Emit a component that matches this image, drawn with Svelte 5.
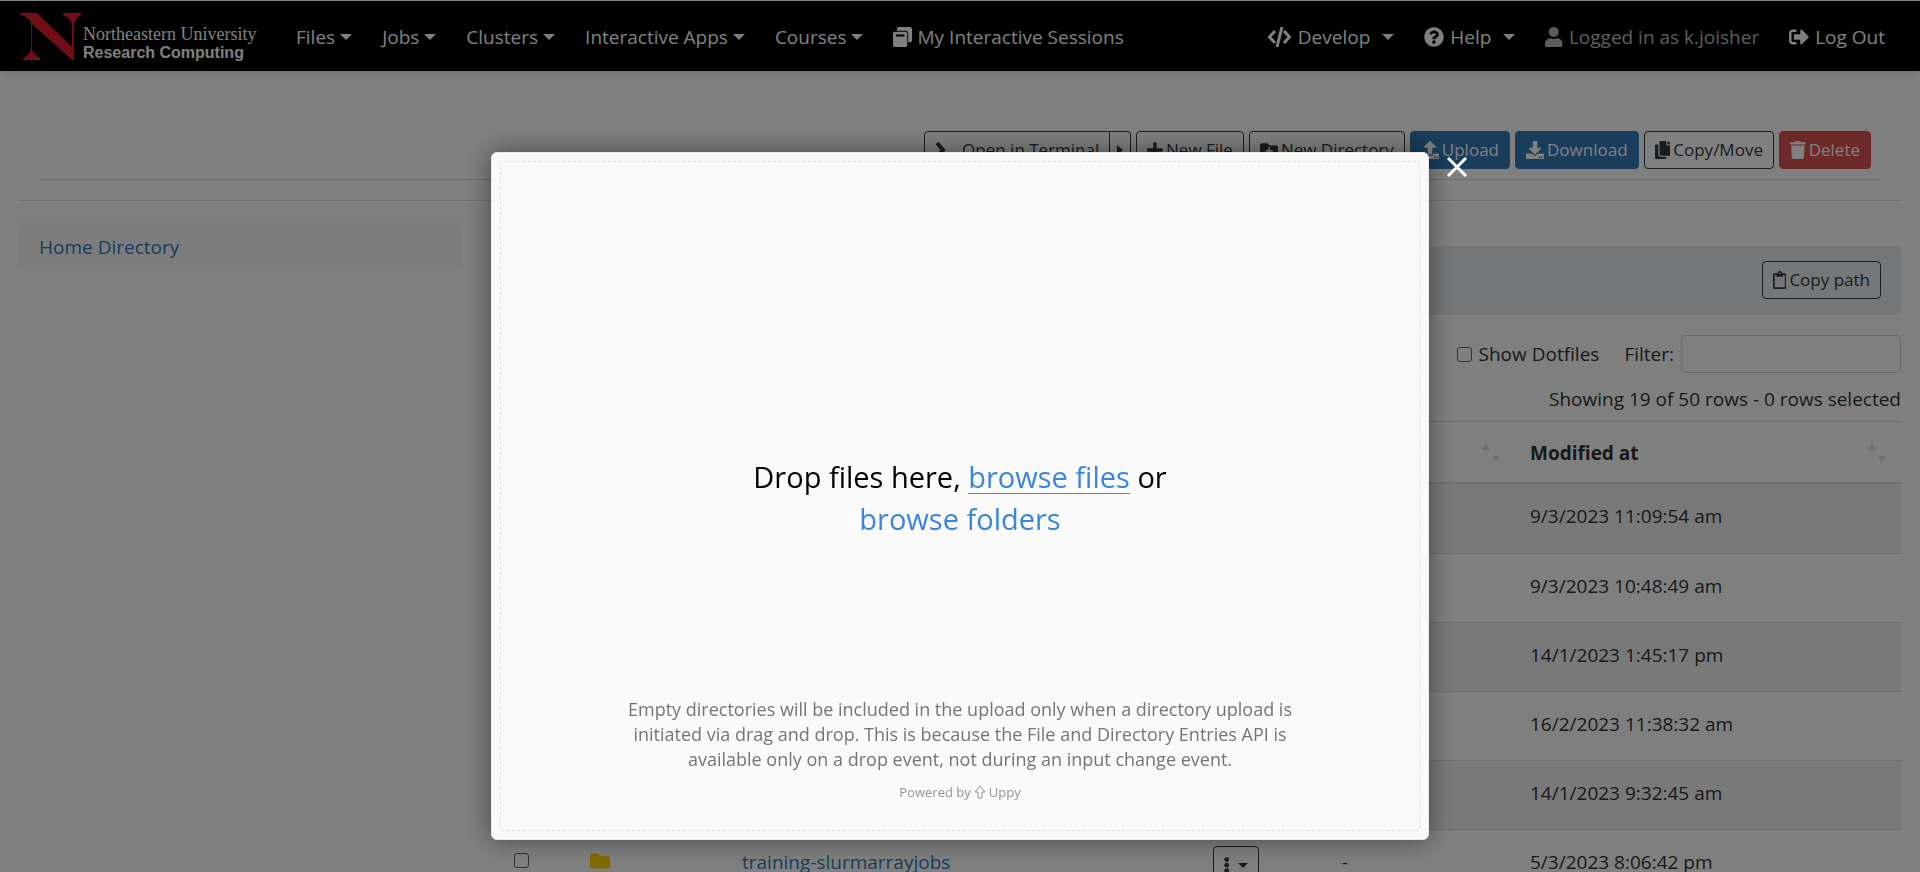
<script>
  const menus = ['Files', 'Jobs', 'Clusters', 'Interactive Apps', 'Courses'];
  const rows = [
    { date: '9/3/2023 11:09:54 am' },
    { date: '9/3/2023 10:48:49 am' },
    { date: '14/1/2023 1:45:17 pm' },
    { date: '16/2/2023 11:38:32 am' },
    { date: '14/1/2023 9:32:45 am' },
    { date: '5/3/2023 8:06:42 pm', name: 'training-slurmarrayjobs', size: '-' }
  ];
  const icons = {
    sessions: { w: 20, h: 21, d: 'M6 0h12a2 2 0 0 1 2 2v12a2 2 0 0 1-2 2h-2V7a3 3 0 0 0-3-3H4V2a2 2 0 0 1 2-2zM2 5h11a2 2 0 0 1 2 2v12a2 2 0 0 1-2 2H2a2 2 0 0 1-2-2V7a2 2 0 0 1 2-2zm1 3v2h9V8z' },
    help: { w: 512, h: 512, d: 'M504 256c0 137-111 248-248 248S8 393 8 256 119 8 256 8s248 111 248 248zM262.700 90c-54.500 0-89.300 23-116.500 63.800-3.500 5.300-2.400 12.400 2.700 16.300l34.700 26.300c5.200 3.900 12.600 3 16.700-2.100 17.900-22.700 30.100-35.800 57.300-35.800 20.400 0 45.700 13.100 45.700 33 0 15-12.400 22.700-32.500 34C247.100 238.500 216 254.900 216 296v4c0 6.600 5.400 12 12 12h56c6.600 0 12-5.400 12-12v-1.300c0-28.500 83.200-29.600 83.200-106.700 0-58-60.200-102-116.500-102zM256 338c-25.400 0-46 20.600-46 46s20.600 46 46 46 46-20.600 46-46-20.600-46-46-46z' },
    user: { w: 448, h: 512, d: 'M224 256a128 128 0 1 0 0-256 128 128 0 0 0 0 256zm89.600 32h-16.700a174 174 0 0 1-145.800 0h-16.700C60.200 288 0 348.200 0 422.400V464c0 26.500 21.500 48 48 48h352c26.500 0 48-21.500 48-48v-41.600C448 348.200 387.800 288 313.600 288z' },
    logout: { w: 512, h: 512, d: 'M497 273 329 441c-15 15-41 4.500-41-17v-96H152c-13.300 0-24-10.700-24-24v-96c0-13.300 10.700-24 24-24h136V88c0-21.400 25.900-32 41-17l168 168c9.300 9.400 9.300 24.600 0 34zM192 436v-40c0-6.600-5.400-12-12-12H96c-17.700 0-32-14.300-32-32V160c0-17.700 14.300-32 32-32h84c6.600 0 12-5.400 12-12V76c0-6.600-5.400-12-12-12H96c-53 0-96 43-96 96v192c0 53 43 96 96 96h84c6.600 0 12-5.400 12-12z' },
    plus: { w: 448, h: 512, d: 'M416 208H272V64c0-17.700-14.300-32-32-32h-32c-17.700 0-32 14.300-32 32v144H32c-17.700 0-32 14.300-32 32v32c0 17.700 14.300 32 32 32h144v144c0 17.700 14.300 32 32 32h32c17.700 0 32-14.300 32-32V304h144c17.700 0 32-14.300 32-32v-32c0-17.700-14.300-32-32-32z' },
    folderPlus: { w: 512, h: 512, d: 'M464 128H272l-64-64H48C21.500 64 0 85.500 0 112v288c0 26.500 21.500 48 48 48h416c26.500 0 48-21.500 48-48V176c0-26.500-21.500-48-48-48zM360 304h-80v80h-48v-80h-80v-48h80v-80h48v80h80z' },
    folder: { w: 512, h: 512, d: 'M464 128H272l-64-64H48C21.500 64 0 85.500 0 112v288c0 26.500 21.500 48 48 48h416c26.500 0 48-21.500 48-48V176c0-26.500-21.500-48-48-48z' },
    upload: { w: 512, h: 512, d: 'M296 384h-80c-13.300 0-24-10.700-24-24V192h-87.700c-17.800 0-26.700-21.500-14.100-34.100L242.300 5.700c7.500-7.500 19.800-7.500 27.300 0l152.200 152.200c12.600 12.600 3.700 34.100-14.100 34.100H320v168c0 13.300-10.700 24-24 24zm216-8v112c0 13.300-10.700 24-24 24H24c-13.300 0-24-10.700-24-24V376c0-13.300 10.700-24 24-24h136v8c0 30.900 25.100 56 56 56h80c30.900 0 56-25.100 56-56v-8h136c13.300 0 24 10.700 24 24zm-144 68v40h40v-40zm64 0v40h40v-40z' },
    download: { w: 512, h: 512, d: 'M216 0h80c13.300 0 24 10.700 24 24v168h87.700c17.800 0 26.700 21.500 14.100 34.100L269.700 378.300c-7.500 7.500-19.800 7.500-27.300 0L90.100 226.100c-12.600-12.600-3.700-34.100 14.100-34.100H192V24c0-13.300 10.700-24 24-24zm296 376v112c0 13.300-10.700 24-24 24H24c-13.300 0-24-10.700-24-24V376c0-13.300 10.700-24 24-24h146.700l49 49c20.100 20.100 52.500 20.100 72.600 0l49-49H488c13.300 0 24 10.700 24 24zm-144 68v40h40v-40zm64 0v40h40v-40z' },
    copy: { w: 448, h: 512, d: 'M320 448v40c0 13.300-10.700 24-24 24H24c-13.300 0-24-10.700-24-24V120c0-13.300 10.700-24 24-24h72v296c0 30.900 25.100 56 56 56zm0-344V0H152c-13.300 0-24 10.700-24 24v368c0 13.300 10.700 24 24 24h272c13.300 0 24-10.700 24-24V128H344c-13.200 0-24-10.800-24-24zm121-31L375 7a24 24 0 0 0-17-7h-6v96h96v-6.100a24 24 0 0 0-7-17z' },
    trash: { w: 448, h: 512, d: 'M432 32H312l-9.400-18.700A24 24 0 0 0 281.100 0H166.800a23.700 23.700 0 0 0-21.400 13.300L136 32H16A16 16 0 0 0 0 48v32a16 16 0 0 0 16 16h416a16 16 0 0 0 16-16V48a16 16 0 0 0-16-16zM53.200 467a48 48 0 0 0 47.900 45h245.800a48 48 0 0 0 47.900-45L416 128H32z' },
    clipboard: { w: 384, h: 512, d: 'M336 64h-80a64 64 0 0 0-128 0H48C21.500 64 0 85.500 0 112v352c0 26.500 21.500 48 48 48h288c26.500 0 48-21.500 48-48V112c0-26.500-21.500-48-48-48zM192 40a24 24 0 1 1 0 48 24 24 0 0 1 0-48zm144 418a6 6 0 0 1-6 6H54a6 6 0 0 1-6-6V118a6 6 0 0 1 6-6h42v36a12 12 0 0 0 12 12h168a12 12 0 0 0 12-12v-36h42a6 6 0 0 1 6 6z' }
  };
</script>

{#snippet icon(name)}
  <svg class="icon {name}" viewBox="0 0 {icons[name].w} {icons[name].h}" aria-hidden="true">
    <path fill="currentColor" fill-rule="evenodd" d={icons[name].d} />
  </svg>
{/snippet}

<div class="page">
  <nav class="navbar">
    <a class="brand" href="#home">
      <svg class="mark" viewBox="0 0 61 47" aria-hidden="true">
        <path fill="#e31b2d" d="M0 0H17L52 34V12Q51 5 43 2V0H61V2Q55 5 54 12V47H52L12 11V36Q13 42 20 45V47H3V45Q10 42 11 36V9Q7 3 0 2Z" />
      </svg>
      <span class="brand-text">
        <span class="university">Northeastern University</span>
        <span class="department">Research Computing</span>
      </span>
    </a>
    <div class="menu">
      {#each menus as label}
        <button class="nav-item">{label}<i class="caret"></i></button>
      {/each}
      <a class="nav-item" href="#sessions">{@render icon('sessions')}My Interactive Sessions</a>
    </div>
    <div class="menu right">
      <button class="nav-item">
        <svg class="icon code" viewBox="0 0 25 20" fill="none" stroke="currentColor" stroke-width="3" aria-hidden="true">
          <path d="M8 4 2.500 10 8 16M17 4l5.500 6-5.500 6M15 0l-5 20" />
        </svg>Develop<i class="caret wide"></i>
      </button>
      <button class="nav-item">{@render icon('help')}Help<i class="caret wide"></i></button>
      <span class="nav-item muted">{@render icon('user')}Logged in as k.joisher</span>
      <a class="nav-item" href="#logout">{@render icon('logout')}Log Out</a>
    </div>
  </nav>

  <div class="toolbar">
    <div class="split">
      <button class="btn">
        <svg class="icon prompt" viewBox="0 0 24 18" fill="none" stroke="currentColor" stroke-width="4" aria-hidden="true">
          <path d="m2 2 6 7-6 7" />
        </svg>Open in Terminal
      </button>
      <button class="btn toggle" aria-label="Terminal options"><i class="caret side"></i></button>
    </div>
    <button class="btn">{@render icon('plus')}New File</button>
    <button class="btn">{@render icon('folderPlus')}New Directory</button>
    <button class="btn primary">{@render icon('upload')}Upload</button>
    <button class="btn primary">{@render icon('download')}Download</button>
    <button class="btn">{@render icon('copy')}Copy/Move</button>
    <button class="btn danger">{@render icon('trash')}Delete</button>
  </div>

  <div class="columns">
    <aside><a class="home" href="#home-directory">Home Directory</a></aside>
    <main>
      <div class="path-bar">
        <button class="btn">{@render icon('clipboard')}Copy path</button>
      </div>
      <div class="filters">
        <label class="dotfiles"><input class="check" type="checkbox" />Show Dotfiles</label>
        <label class="filter">Filter:<input class="search" type="search" /></label>
      </div>
      <p class="status">Showing 19 of 50 rows - 0 rows selected</p>
      <table>
        <colgroup>
          <col class="c-check" /><col class="c-type" /><col /><col class="c-action" /><col class="c-size" /><col class="c-date" />
        </colgroup>
        <thead>
          <tr>
            <th></th><th></th><th></th><th></th>
            <th><span class="head"><i></i><span class="sort"></span></span></th>
            <th><span class="head">Modified at<span class="sort"></span></span></th>
          </tr>
        </thead>
        <tbody>
          {#each rows as row}
            <tr>
              {#if row.name}
                <td><input class="check" type="checkbox" aria-label={row.name} /></td>
                <td>{@render icon('folder')}</td>
                <td><a href="#folder">{row.name}</a></td>
                <td>
                  <button class="btn actions" aria-label="Actions">
                    <svg class="icon dots" viewBox="0 0 6 20" fill="currentColor" aria-hidden="true">
                      <circle cx="3" cy="4" r="2.700" /><circle cx="3" cy="10.200" r="2.700" /><circle cx="3" cy="16.400" r="2.700" />
                    </svg><i class="caret small"></i>
                  </button>
                </td>
                <td>{row.size}</td>
              {:else}
                <td></td><td></td><td></td><td></td><td></td>
              {/if}
              <td>{row.date}</td>
            </tr>
          {/each}
        </tbody>
      </table>
    </main>
  </div>
</div>

<div class="overlay">
  <div class="dialog" role="dialog" aria-modal="true">
    <button class="close" aria-label="Close">
      <svg viewBox="0 0 20 20" fill="none" stroke="currentColor" stroke-width="3" aria-hidden="true"><path d="m1 1 18 18M19 1 1 19" /></svg>
    </button>
    <div class="drop">
      <div class="prompt-text">
        Drop files here, <button class="link underlined">browse files</button> or <button class="link">browse folders</button>
      </div>
      <div class="note">
        <p>Empty directories will be included in the upload only when a directory upload is initiated via drag and drop. This is because the File and Directory Entries API is available only on a drop event, not during an input change event.</p>
        <a class="powered" href="#uppy">Powered by
          <svg viewBox="0 0 12 14" fill="none" stroke="currentColor" aria-hidden="true"><path d="M6 1 1 7h3v6h4V7h3z" /></svg>Uppy</a>
      </div>
    </div>
  </div>
</div>

<style>
  :global(body) { overflow: hidden; background: #fff; }
  :global(*) { box-sizing: border-box; }
  .page, .overlay { font-family: "Open Sans", sans-serif; font-size: 19px; line-height: 30px; color: #333; }
  .page { height: 100vh; overflow: hidden; }
  button { font: inherit; color: inherit; background: none; border: 0; padding: 0; }
  a { color: #337ab7; text-decoration: none; }
  p { margin: 0; }
  .icon { height: 18px; width: auto; flex: none; }

  .navbar { display: flex; align-items: center; height: 71px; padding: 0 35px 0 20px; background: #000; border-top: 1px solid #fff; box-shadow: 0 2px 6px rgba(0, 0, 0, .12); }
  .brand { display: flex; align-items: center; gap: 2px; color: #fff; width: 276px; }
  .mark { width: 61px; height: 47px; flex: none; }
  .brand-text { display: flex; flex-direction: column; padding-top: 13px; white-space: nowrap; }
  .university { font: 18px/20px "Liberation Serif", serif; }
  .department { font: bold 16px/17px "Liberation Sans", sans-serif; }
  .menu { display: flex; align-items: center; gap: 30px; padding-top: 2px; white-space: nowrap; }
  .menu.right { margin-left: auto; }
  .nav-item { display: flex; align-items: center; gap: 5px; color: #fff; }
  .right .nav-item { gap: 6px; }
  .nav-item .icon { height: 20px; }
  .muted { color: #bbb; }
  .caret { border: 6px solid transparent; border-top-color: currentColor; border-bottom: 0; }
  .caret.wide { margin-left: 6px; }
  .caret.small { border-width: 5px 5px 0; }
  .caret.side { border: 5px solid transparent; border-left: 6px solid currentColor; border-right: 0; }

  .toolbar { display: flex; justify-content: flex-end; gap: 5px; margin: 60px 39px 0; padding: 0 10px 10px; border-bottom: 1px solid #e2e2e2; }
  .btn { display: flex; align-items: center; gap: 3px; height: 38px; padding: 0 10px; border: 1px solid #343a40; border-radius: 4px; font-size: 17px; color: #343a40; white-space: nowrap; }
  .primary { background: #337ab7; border-color: #337ab7; color: #fff; }
  .danger { background: #d9534f; border-color: #d9534f; color: #fff; }
  .split { display: flex; }
  .split .btn:first-child { border-radius: 4px 0 0 4px; }
  .split .toggle { border-left: 0; border-radius: 0 4px 4px 0; padding: 0 7px; }

  .columns { display: grid; grid-template-columns: 1fr 3fr; margin-top: 20px; position: relative; }
  .columns::before { content: ""; position: absolute; left: 19px; right: 19px; top: 0; border-top: 1px solid #e2e2e2; }
  aside { padding: 21px 19px; }
  .home { display: block; padding: 11px 20px 9px; background: #f8f8f8; border-radius: 5px; }
  main { padding: 46px 19px 0; min-width: 0; }
  .path-bar { display: flex; justify-content: flex-end; padding: 15px 20px 16px; background: #e9ecef; border-radius: 5px; }
  .filters { display: flex; justify-content: flex-end; align-items: center; gap: 25px; margin-top: 20px; }
  .dotfiles, .filter { display: flex; align-items: center; gap: 7px; }
  .check { appearance: none; width: 15px; height: 15px; margin: 0; border: 1px solid #666; border-radius: 3px; background: #fff; }
  .search { width: 220px; height: 38px; border: 1px solid #ced4da; border-radius: 5px; background: #fff; }
  .status { margin: 11px 0 7px; text-align: right; }
  table { width: 100%; table-layout: fixed; border-collapse: separate; border-spacing: 0; }
  .c-check { width: 76px; }
  .c-type { width: 152px; }
  .c-action { width: 129px; }
  .c-size { width: 188px; }
  .c-date { width: 386px; }
  th, td { padding: 0 15px; border-top: 1px solid #dee2e6; text-align: left; }
  th { height: 63px; border-bottom: 2px solid #dee2e6; }
  td { height: 69px; padding-top: 16px; vertical-align: top; line-height: 32px; }
  tbody tr:first-child td { border-top: 0; }
  tbody tr:nth-child(odd) { background: #f2f2f2; }
  td .check { display: block; margin-top: 7px; }
  td .folder { display: block; height: 20px; margin-top: 5px; color: #ffd700; }
  .actions { gap: 9px; }
  .head { display: flex; justify-content: space-between; align-items: center; padding-top: 2px; }
  .sort { position: relative; width: 18px; height: 18px; }
  .sort::before, .sort::after { content: ""; position: absolute; border: 4px solid transparent; }
  .sort::before { left: 0; top: 0; border-bottom: 6px solid #ddd; border-top: 0; }
  .sort::after { right: 0; bottom: 0; border-top: 6px solid #ddd; border-bottom: 0; }

  .overlay { position: fixed; inset: 0; display: grid; place-items: center; padding-top: 120px; background: rgba(0, 0, 0, .5); }
  .dialog { position: relative; display: flex; width: 938px; max-width: 90vw; height: 688px; padding: 8px; background: #fafafa; border: 1px solid #eaeaea; border-radius: 6px; box-shadow: 0 0 24px rgba(0, 0, 0, .45); }
  .close { position: absolute; right: -39px; top: 4px; width: 20px; height: 20px; color: #fff; }
  .close svg, .powered svg { display: block; }
  .drop { flex: 1; display: grid; grid-template-rows: 1fr auto 1fr; justify-items: center; border: 1px dashed #dfdfdf; border-radius: 3px; text-align: center; }
  .prompt-text { grid-row: 2; width: 460px; padding-top: 3px; font-size: 29px; line-height: 42px; color: #000; }
  .link { color: #3a86de; }
  .underlined { border-bottom: 1px solid; line-height: 32px; }
  .note { grid-row: 3; align-self: end; width: 690px; padding-bottom: 28px; font-size: 18px; line-height: 25px; color: #757575; }
  .powered { display: flex; justify-content: center; align-items: center; gap: 3px; margin-top: 10px; font-size: 13px; line-height: 20px; color: #939393; }
  .powered svg { width: 12px; height: 14px; }
</style>
